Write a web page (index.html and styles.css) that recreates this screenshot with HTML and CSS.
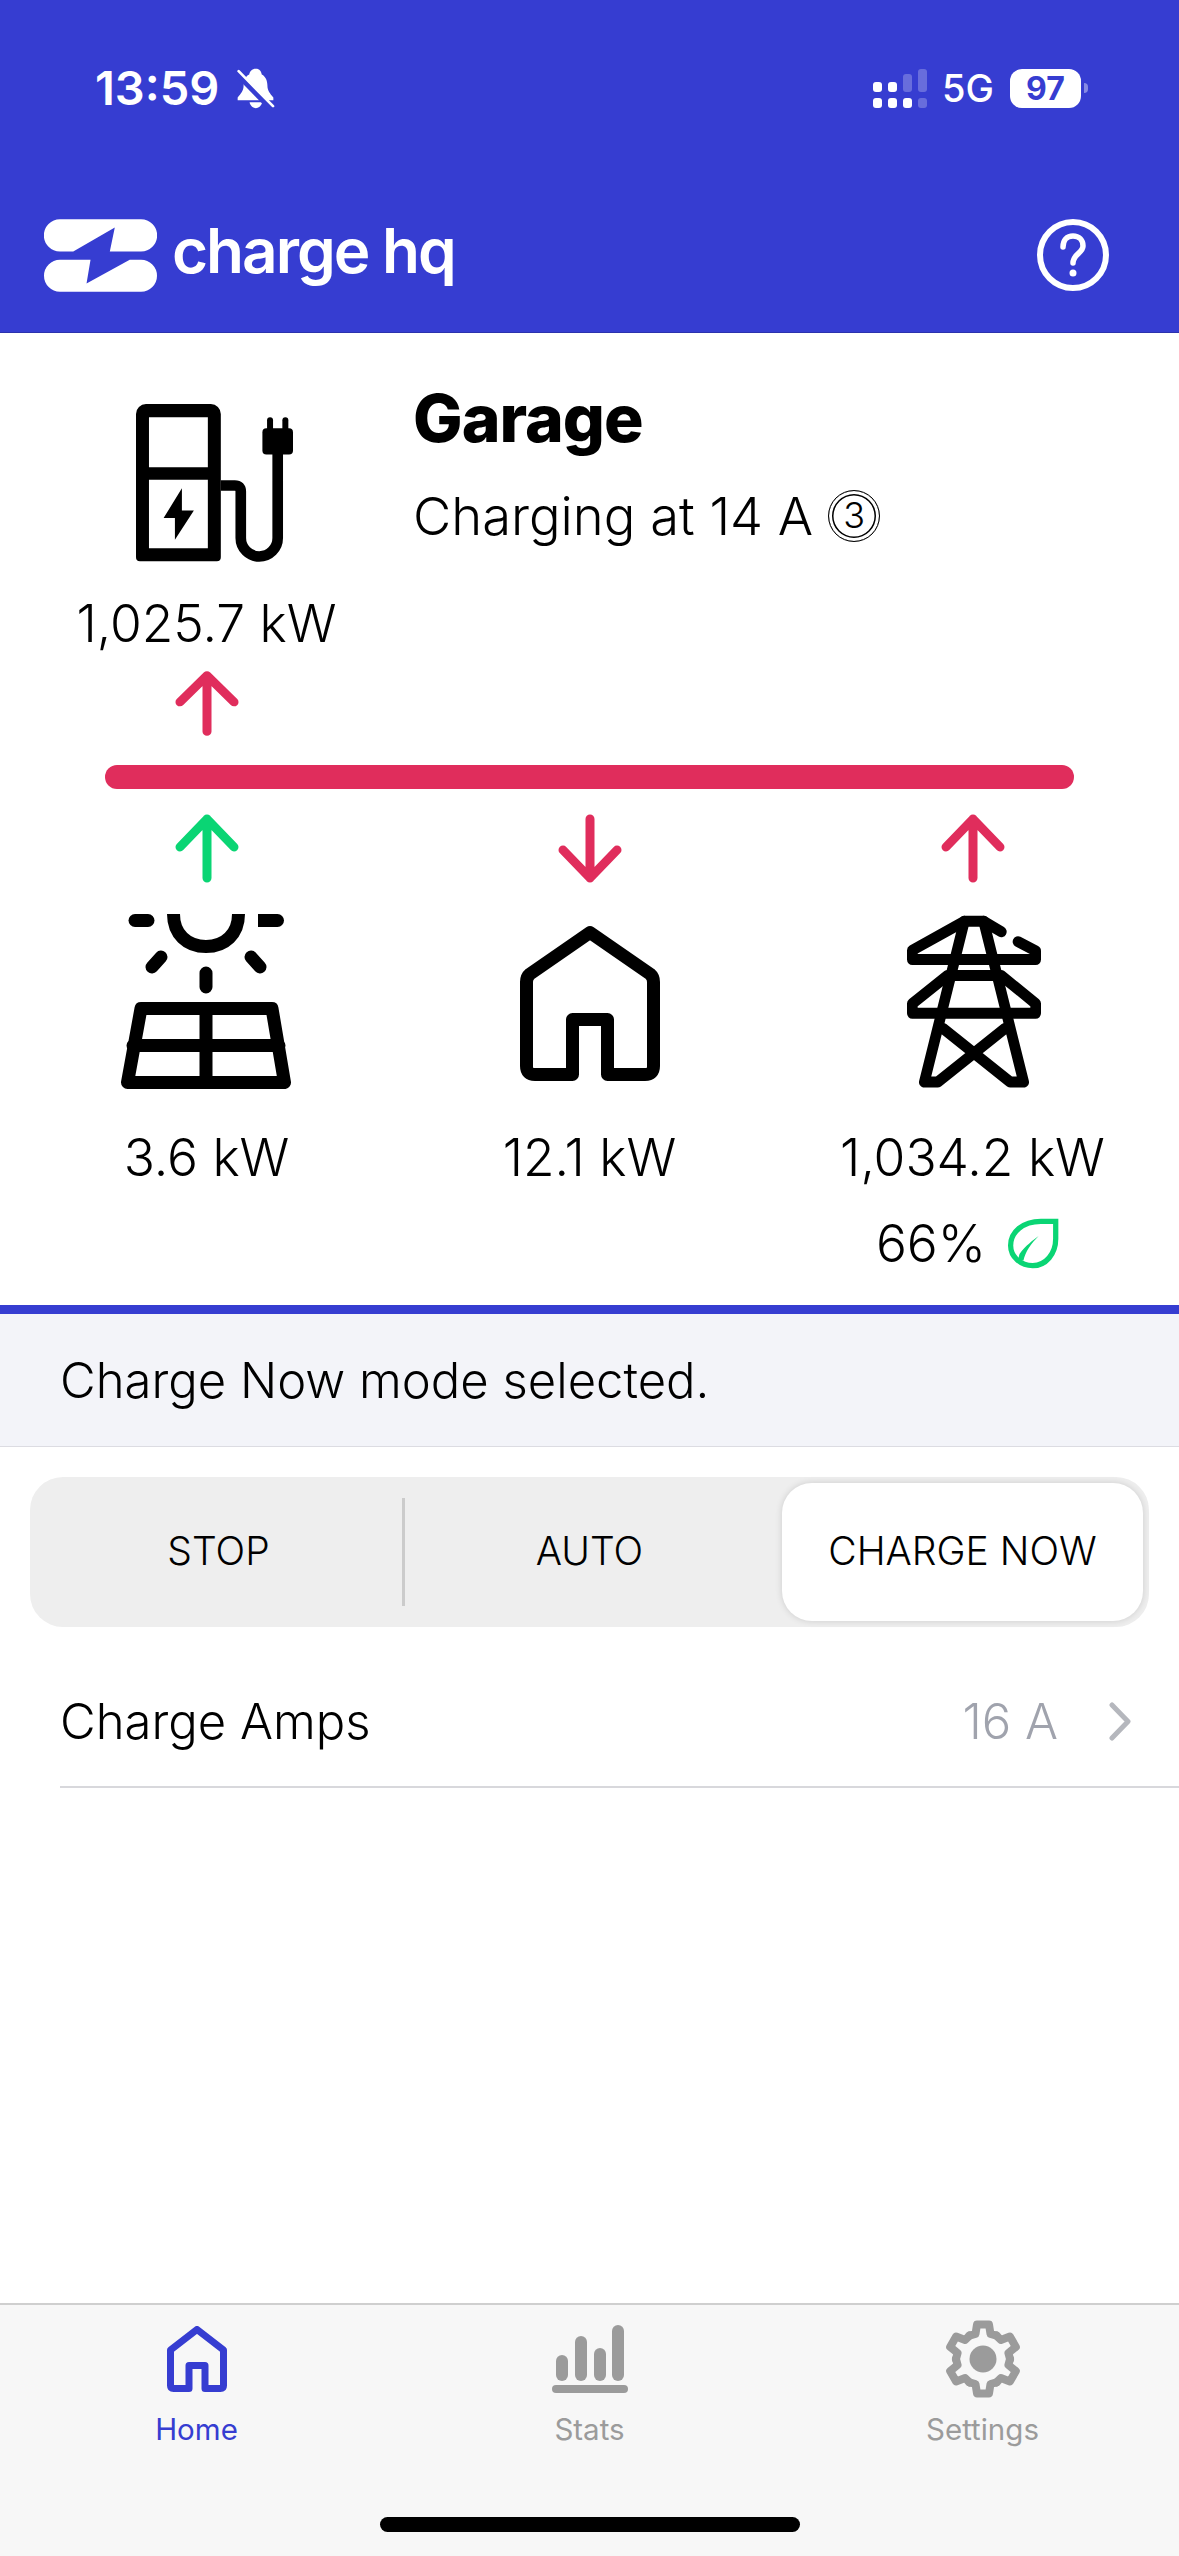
FILE: index.html
```html
<!DOCTYPE html>
<html lang="en">
<head>
<meta charset="utf-8">
<title>Charge HQ</title>
<link rel="stylesheet" href="styles.css">
</head>
<body>
<div class="app">
  <header class="header">
    <div class="status">
      <div class="status-left">
        <span class="time">13:59</span>
        <svg class="bell" viewBox="525 50 118 126"><path fill="#fff" d="M585 55C573 55 567 63 565 72C552 78 548 92 548 105C548 122 540 130 530 142V150H638V142C628 130 620 122 620 105C620 92 615 78 603 72C601 63 597 55 585 55Z"/><path fill="#fff" d="M566 156H604C602 168 592 174 585 174C578 174 568 168 566 156Z"/><path stroke="#363dd1" stroke-width="20" d="M524 64L630 172"/><path stroke="#fff" stroke-width="8" stroke-linecap="round" d="M533 62L637 168"/></svg>
      </div>
      <div class="status-right">
        <svg class="signal" viewBox="0 0 54 39"><g fill="#fff"><rect x="0" y="13" width="9" height="10" rx="3"/><rect x="15" y="13" width="9" height="10" rx="3"/><rect x="0" y="29" width="9" height="10" rx="3"/><rect x="15" y="29" width="9" height="10" rx="3"/><rect x="30" y="29" width="9" height="10" rx="3"/></g><g fill="#fff" fill-opacity=".25"><rect x="30" y="5" width="9" height="18" rx="3"/><rect x="45" y="0" width="9" height="23" rx="3"/><rect x="45" y="29" width="9" height="10" rx="3"/></g></svg>
        <span class="net">5G</span>
        <span class="battery">97</span>
        <span class="nub"></span>
      </div>
    </div>
    <div class="appbar">
      <div class="brand">
        <svg class="logo" viewBox="42 55 340 218"><path fill="#fff" d="M90 55H334A48.500 48.500 0 0 1 334 152H240L255 80L130 152H90A48.500 48.500 0 0 1 90 55Z"/><path fill="#fff" d="M90 177H182L170 248L300 177H334A48 48 0 0 1 334 273H90A48 48 0 0 1 90 177Z"/></svg>
        <span class="brand-name">charge hq</span>
      </div>
      <svg class="help" viewBox="0 0 74 74" fill="none" stroke="#fff" stroke-width="6" stroke-linecap="round"><circle cx="37" cy="37" r="33"/><path stroke-width="5.500" d="M27 29C27 22 31 18 37 18C43 18 47 22 47 28C47 35 37 36 37 45"/><circle cx="37" cy="55" r="2" stroke-width="3" fill="#fff"/></svg>
    </div>
  </header>

  <section class="flow">
    <div class="col">
      <svg class="charger" viewBox="228 132 475 475">
        <path fill-rule="evenodd" d="M258 132H453A30 30 0 0 1 483 162V593A12 12 0 0 1 471 605H240A12 12 0 0 1 228 593V162A30 30 0 0 1 258 132ZM267 172V322H444V172ZM267 360V566H444V360Z"/>
        <path d="M366 385L311 475H345V540L402 452H366Z"/>
        <path fill="none" stroke="#000" stroke-width="32" d="M483 377H525Q543 377 543 395V535A55.500 55.500 0 0 0 654 535V280"/>
        <rect x="608" y="205" width="92" height="79" rx="12"/>
        <rect x="622" y="172" width="18" height="45" rx="9"/>
        <rect x="668" y="172" width="18" height="45" rx="9"/>
      </svg>
      <div class="value value-top">1,025.7 kW</div>
      <svg class="arrow arrow-top red" viewBox="0 0 64 75" preserveAspectRatio="none"><path d="M32 67V8M5 36L32 8L59 36"/></svg>
    </div>
    <div class="detail">
      <h1 class="title">Garage</h1>
      <p class="sub">Charging at 14 A <span class="phase">3</span></p>
    </div>
    <div class="bar"></div>
    <div class="col">
      <svg class="arrow green" viewBox="0 0 64 75" preserveAspectRatio="none"><path d="M32 67V8M5 36L32 8L59 36"/></svg>
      <svg class="node" viewBox="117 910 180 180" fill="none" stroke="#000" stroke-width="13" stroke-linecap="round" stroke-linejoin="round">
        <path d="M135 920.500H148"/>
        <path fill="#000" stroke="none" d="M258 914H277.500A6.500 6.500 0 0 1 277.500 927H258Z"/>
        <path stroke-linecap="butt" d="M173.500 914C173.500 934 187 946.500 206 946.500C225 946.500 238.500 934 238.500 914"/>
        <path d="M161 957L152 967M251 957L260 967M206 973V987"/>
        <path d="M141 1008.500H272L284.500 1082.500H127.500ZM133 1045.500H279M206 1008.500V1082.500"/>
      </svg>
      <div class="value">3.6 kW</div>
    </div>
    <div class="col">
      <svg class="arrow red" viewBox="0 0 64 75" preserveAspectRatio="none"><path d="M32 8V67M5 39L32 67L59 39"/></svg>
      <svg class="node" viewBox="500 910 180 180" fill="none" stroke="#000" stroke-width="13" stroke-linecap="round" stroke-linejoin="round">
        <path d="M572.500 1074.500H535Q526.500 1074.500 526.500 1066V982Q526.500 977 530 974L590 932.500L650 974Q653.500 977 653.500 982V1066Q653.500 1074.500 645 1074.500H607.500V1019.500H572.500Z"/>
      </svg>
      <div class="value">12.1 kW</div>
    </div>
    <div class="col">
      <svg class="arrow red" viewBox="0 0 64 75" preserveAspectRatio="none"><path d="M32 67V8M5 36L32 8L59 36"/></svg>
      <svg class="node" viewBox="246 378 540 523" preserveAspectRatio="none" fill="none" stroke="#000" stroke-width="32" stroke-linecap="round" stroke-linejoin="round">
        <path d="M601 441L548 411H490L334 495V522H704V497L651 470"/>
        <path d="M440 568H600L704 650V678H334V650Z"/>
        <path d="M490 411L370 878H410L612 722M548 411L668 878H628L426 722"/>
      </svg>
      <div class="value">1,034.2 kW</div>
      <div class="green-share">
        <span class="value">66%</span>
        <svg class="leaf" viewBox="612 1278 158 152" preserveAspectRatio="none"><path fill="none" stroke="#0ad574" stroke-width="16" d="M760 1288H715C660 1288 623 1320 623 1360C623 1395 655 1420 690 1420C730 1420 760 1385 760 1340Z"/><path fill="#0ad574" d="M645 1405L650 1385C670 1360 690 1345 708 1332C685 1355 668 1378 662 1405Z"/></svg>
      </div>
    </div>
  </section>

  <div class="banner">Charge Now mode selected.</div>

  <div class="segments">
    <div class="segment divided">STOP</div>
    <div class="segment">AUTO</div>
    <div class="segment active">CHARGE NOW</div>
  </div>

  <div class="row">
    <span class="row-label">Charge Amps</span>
    <span class="row-value">16 A</span>
    <svg class="chevron" viewBox="0 0 22 39" fill="none" stroke="#b5b7bd" stroke-width="5" stroke-linecap="round" stroke-linejoin="round"><path d="M3 3L19 19.500L3 36"/></svg>
  </div>

  <div class="spacer"></div>

  <nav class="tabbar">
    <div class="tabs">
      <div class="tab on">
        <div class="tab-icon"><svg class="t-home" viewBox="0 0 60 66" fill="none" stroke="#363dd1" stroke-width="7" stroke-linejoin="round"><path d="M22 62.500H6.500Q3.500 62.500 3.500 59.500V24L30 3.500L56.500 24V59.500Q56.500 62.500 53.500 62.500H38V39.500H22Z"/></svg></div>
        <span>Home</span>
      </div>
      <div class="tab">
        <div class="tab-icon"><svg class="t-stats" viewBox="553 2324 76 68" fill="#9b9b9b"><rect x="557" y="2354" width="12" height="26" rx="6"/><rect x="576" y="2335" width="12" height="45" rx="6"/><rect x="595" y="2347" width="12" height="33" rx="6"/><rect x="613" y="2324" width="12" height="56" rx="6"/><rect x="553" y="2384" width="76" height="8" rx="4"/></svg></div>
        <span>Stats</span>
      </div>
      <div class="tab">
        <div class="tab-icon"><svg class="t-gear" viewBox="-38 -39 76 78"><defs><path id="tooth" fill="none" stroke="#9b9b9b" stroke-width="8" stroke-linejoin="round" stroke-linecap="round" d="M-13.500 -23.400L-7.500 -25L-6 -34.500H6L7.500 -25L13.500 -23.400"/></defs><use href="#tooth"/><use href="#tooth" transform="rotate(60)"/><use href="#tooth" transform="rotate(120)"/><use href="#tooth" transform="rotate(180)"/><use href="#tooth" transform="rotate(240)"/><use href="#tooth" transform="rotate(300)"/><circle r="13.500" fill="#9b9b9b"/></svg></div>
        <span>Settings</span>
      </div>
    </div>
    <div class="home-indicator"></div>
  </nav>
</div>
</body>
</html>
```

FILE: styles.css
```css
* { box-sizing: border-box; }
html, body { margin: 0; padding: 0; background: #fff; }
body { font-family: "Inter", "Liberation Sans", sans-serif; font-weight: 300; color: #000; }
.app { width: 1179px; height: 2556px; display: flex; flex-direction: column; overflow: hidden; }

.header { height: 333px; flex: none; background: #363dd1; border-bottom: 1px solid #2c32ad; color: #fff; }
.status { height: 56px; margin-top: 60px; padding: 0 91px 0 95px; display: flex; justify-content: space-between; align-items: center; }
.status-left, .status-right { display: flex; align-items: center; }
.time { font: 600 47px/56px "Inter", sans-serif; }
.bell { width: 39px; height: 42px; margin-left: 17px; }
.signal { width: 54px; height: 39px; }
.net { font: 500 38px/40px "Inter", sans-serif; margin-left: 15px; }
.battery { width: 71px; height: 39px; margin-left: 16px; border-radius: 12px; background: #fff; color: #363dd1; font: 700 32px/39px "Inter", sans-serif; text-align: center; }
.nub { width: 4px; height: 10px; margin-left: 3px; background: rgba(255,255,255,.4); border-radius: 0 4px 4px 0; }

.appbar { margin-top: 102px; padding: 0 69px 0 44px; display: flex; justify-content: space-between; align-items: center; }
.brand { display: flex; align-items: center; gap: 15px; }
.logo { width: 113px; height: 73px; }
.brand-name { font: 600 62px/63px "Inter", sans-serif; letter-spacing: -2px; margin-bottom: 10px; }
.help { width: 74px; height: 74px; }

.flow { height: 972px; flex: none; display: grid; grid-template-columns: repeat(3, 383px); grid-template-rows: auto auto auto; justify-content: center; align-content: start; }
.col { display: flex; flex-direction: column; align-items: center; }
.charger { width: 158px; height: 158px; margin: 71px 0 0 16px; }
.value { font-size: 51.5px; line-height: 60px; white-space: nowrap; }
.value-top { margin-top: 31px; }
.arrow { width: 64px; height: 75px; display: block; fill: none; stroke-width: 9; stroke-linecap: round; stroke-linejoin: round; }
.arrow-top { height: 71px; margin-top: 15px; }
.red { stroke: #e02d5c; }
.green { stroke: #0ad574; }
.detail { grid-column: 2 / span 2; padding: 45px 0 0 15px; }
.title { margin: 0; font-size: 66px; line-height: 80px; font-weight: 800; letter-spacing: -1px; }
.sub { margin: 28px 0 0; font-size: 52.5px; line-height: 60px; display: flex; align-items: center; gap: 15px; }
.phase { width: 52px; height: 52px; border: 1.5px solid #000; border-radius: 50%; box-shadow: inset 0 0 0 3px #fff, inset 0 0 0 4.5px #000; font-size: 36px; line-height: 49px; text-align: center; }
.bar { grid-column: 1 / -1; height: 24px; margin: 26px 90px 22px 90px; background: #e02d5c; border-radius: 12px; }
.node { width: 180px; height: 180px; margin: 24px 0 37px; }
.green-share { display: flex; align-items: center; gap: 21px; margin-top: 26px; padding-right: 10px; }
.leaf { width: 52px; height: 51px; }

.banner { height: 142px; flex: none; padding: 0 60px; display: flex; align-items: center; background: #f3f4f9; border-top: 9px solid #363dd1; border-bottom: 1px solid #dcdce2; font-size: 49px; }

.segments { height: 150px; flex: none; margin: 30px 30px 0; padding: 6px; display: grid; grid-template-columns: repeat(3, 1fr); background: #eee; border-radius: 33px; }
.segment { display: flex; align-items: center; justify-content: center; padding-bottom: 4px; font-size: 39px; }
.divided { position: relative; padding-right: 4px; }
.divided::after { content: ""; position: absolute; right: 0; top: 15px; bottom: 15px; width: 3px; background: #cbcbcb; }
.active { margin-left: 8px; background: #fff; border-radius: 30px; box-shadow: 0 0 7px rgba(0,0,0,.14); }

.row { height: 132px; flex: none; margin: 29px 0 0 60px; padding-right: 48px; display: flex; align-items: center; border-bottom: 2px solid #d8d8dc; font-size: 49px; }
.row-label { flex: 1; }
.row-value { color: #a0a3ad; }
.chevron { width: 22px; height: 39px; margin-left: 51px; }

.spacer { flex: 1; }

.tabbar { height: 253px; flex: none; display: flex; flex-direction: column; background: #f7f7f7; border-top: 2px solid #cfcfcf; }
.tabs { display: grid; grid-template-columns: repeat(3, 393px); padding-top: 15px; }
.tab { display: flex; flex-direction: column; align-items: center; color: #9b9b9b; font-size: 29.5px; line-height: 40px; font-weight: 400; }
.tab.on { color: #363dd1; }
.tab-icon { height: 78px; display: flex; align-items: center; justify-content: center; margin-bottom: 11px; }
.t-home { width: 60px; height: 66px; }
.t-stats { width: 76px; height: 68px; }
.t-gear { width: 76px; height: 78px; }
.home-indicator { width: 420px; height: 15px; margin: auto auto 24px; background: #000; border-radius: 8px; }
```
